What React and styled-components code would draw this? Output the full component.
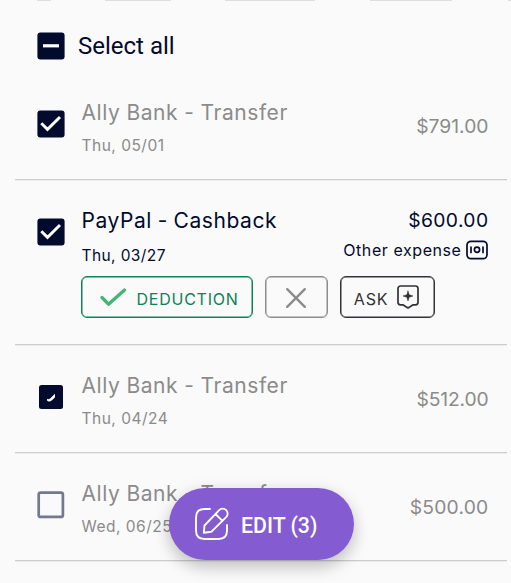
import React from "react";
import styled, { createGlobalStyle, css } from "styled-components";

const INK = "#020a2e";

const Global = createGlobalStyle`
  *, *::before, *::after { box-sizing: border-box; }
  body { margin: 0; background: #fafafa; overflow: hidden; }
`;

const Screen = styled.main`
  position: relative;
  width: 511px;
  height: 583px;
  overflow: hidden;
  background: #fafafa;
  color: ${INK};
  font-family: Inter, "Liberation Sans", sans-serif;
`;

const ChipStrip = styled.div`
  display: flex;
  height: 1px;
  padding-left: 37px;
`;

const ChipEdge = styled.span`
  flex: none;
  width: ${(p) => p.$w}px;
  margin-right: ${(p) => p.$gap}px;
  background: #dedede;
`;

const SelectAll = styled.div`
  display: flex;
  align-items: center;
  gap: 13px;
  height: 71px;
  padding: 18px 0 0 37px;
  font-family: Roboto, sans-serif;
  font-size: 24px;
`;

const SelectLabel = styled.span`
  padding-top: 1px;
`;

const Row = styled.article`
  display: grid;
  grid-template-columns: 66.5px 1fr auto;
  height: ${(p) => p.$h}px;
  margin: 0 4px 0 15px;
  border-bottom: 1px solid #cdcdcd;
  box-shadow: 0 1px 0 #ececec;
  color: ${(p) => (p.$muted ? "#8b8b8b" : INK)};
`;

const CheckCell = styled.div`
  padding: ${(p) => p.$top}px 0 0 22px;
`;

const Box = styled.svg`
  display: block;
  width: 28px;
  height: 28px;
  flex: none;
`;

const Details = styled.div`
  display: flex;
  flex-direction: column;
  min-width: 0;
`;

const Title = styled.h2`
  margin: 26px 0 0;
  height: 30px;
  line-height: 30px;
  font-size: 21px;
  font-weight: 400;
  letter-spacing: ${(p) => p.$ls}px;
  word-spacing: ${(p) => p.$ws}px;
  white-space: nowrap;
`;

const Day = styled.p`
  margin: ${(p) => (p.$roomy ? 10 : 8)}px 0 0;
  height: 20px;
  line-height: 20px;
  font-size: 15.5px;
  letter-spacing: ${(p) => p.$ls}px;
`;

const Money = styled.div`
  display: flex;
  flex-direction: column;
  align-items: flex-end;
  padding: ${(p) => p.$top}px 18.5px 0 0;
`;

const Amount = styled.div`
  height: 28px;
  line-height: 28px;
  font-size: 19.3px;
  letter-spacing: ${(p) => p.$ls}px;
`;

const Category = styled.div`
  display: flex;
  align-items: center;
  gap: 4.5px;
  height: 24px;
  margin-top: 4px;
  margin-right: 0.5px;
  font-size: 16px;
  letter-spacing: 0.57px;
  white-space: nowrap;
`;

const Actions = styled.div`
  display: flex;
  gap: 12px;
  margin-top: 10px;
  margin-left: -0.5px;
`;

const tones = {
  green: css`color: #0d8157; border-color: #0d8157;`,
  gray: css`color: #8c8c8c; border-color: #8c8c8c;`,
  dark: css`color: #323237; border-color: #323237;`,
};

const Action = styled.button`
  display: flex;
  flex: none;
  align-items: center;
  justify-content: center;
  gap: ${(p) => p.$gap || 0}px;
  width: ${(p) => p.$w}px;
  height: 42px;
  padding: 4px ${(p) => p.$right || 0}px 0 ${(p) => p.$left || 0}px;
  border: 1px solid;
  border-radius: 6px;
  background: transparent;
  font: 400 16px Inter, sans-serif;
  letter-spacing: 0.75px;
  ${(p) => tones[p.$tone]}
  box-shadow: inset 0 0 0 0.5px currentColor;
`;

const Icon = styled.svg`
  display: block;
  flex: none;
  fill: none;
  stroke: ${(p) => p.$color || "currentColor"};
  stroke-linecap: round;
  stroke-linejoin: round;
  margin-top: ${(p) => p.$shift || 0}px;
`;

const EditButton = styled.button`
  position: absolute;
  left: 169px;
  top: 488px;
  display: flex;
  align-items: center;
  gap: 11px;
  width: 185px;
  height: 72px;
  padding: 0 0 0 25px;
  border: 0;
  border-radius: 36px;
  background: #855bd1;
  color: #fff;
  box-shadow: 0 8px 16px rgba(0, 0, 0, 0.18), 0 2px 18px rgba(0, 0, 0, 0.08);
  font: 500 21.3px Roboto, sans-serif;
  white-space: nowrap;
`;

const EditLabel = styled.span`
  padding-top: 2px;
`;

function Checkbox({ state }) {
  return (
    <Box viewBox="0 0 28 28">
      {state === "empty" ? (
        <rect x="1.7" y="1.7" width="24.2" height="24.2" rx="2" fill="none" stroke="#747891" strokeWidth="2.7" />
      ) : state === "partial" ? (
        <>
          <rect x="2" y="2" width="24" height="24" rx="2.5" fill={INK} />
          <path d="M10 16l1.800.2c2.200-1.100 4-3.200 6.200-5.400v3.400c-1.800 2-3.600 3.900-5.400 4.300H11.500L10 17.600z" fill="#fff" />
        </>
      ) : (
        <rect x=".4" y=".4" width="27.2" height="27.2" rx="3" fill={INK} />
      )}
      {state === "checked" && <path d="M4.300 13.200l6.200 6.200L23 7" fill="none" stroke="#fff" strokeWidth="2.900" />}
      {state === "mixed" && <path d="M6 13.800h16" stroke="#fff" strokeWidth="3.200" />}
    </Box>
  );
}

function Transaction({ state, title, day, amount, amountSpacing }) {
  return (
    <Row $h={108} $muted>
      <CheckCell $top={38}><Checkbox state={state} /></CheckCell>
      <Details>
        <Title $ls={0.55} $ws={-0.3}>{title}</Title>
        <Day $ls={0.5}>{day}</Day>
      </Details>
      <Money $top={40}><Amount $ls={amountSpacing}>{amount}</Amount></Money>
    </Row>
  );
}

export default function App() {
  return (
    <>
      <Global />
      <Screen>
        <ChipStrip>
          <ChipEdge $w={14} $gap={54} />
          <ChipEdge $w={66} $gap={54} />
          <ChipEdge $w={90} $gap={55} />
          <ChipEdge $w={82} $gap={56} />
          <ChipEdge $w={10} $gap={0} />
        </ChipStrip>
        <SelectAll><Checkbox state="mixed" /><SelectLabel>Select all</SelectLabel></SelectAll>
        <Transaction state="checked" title="Ally Bank - Transfer" day="Thu, 05/01" amount="$791.00" amountSpacing={0} />
        <Row $h={165}>
          <CheckCell $top={38}><Checkbox state="checked" /></CheckCell>
          <Details>
            <Title $ls={0.55} $ws={-0.7}>PayPal - Cashback</Title>
            <Day $ls={0.4} $roomy>Thu, 03/27</Day>
            <Actions>
              <Action $tone="green" $w={172} $gap={10} $left={3}>
                <Icon width="28" height="22" viewBox="0 0 28 22" $color="#43b574" strokeWidth="3.300" $shift={-5}>
                  <path d="M3 11.500l6.500 6.700L25.500 4" />
                </Icon>
                DEDUCTION
              </Action>
              <Action $tone="gray" $w={63} $right={1} aria-label="Not a deduction">
                <Icon width="22" height="22" viewBox="0 0 22 22" strokeWidth="2.400" $shift={-3}>
                  <path d="M2.200 2.200l17.600 17.600M19.800 2.200l-17.600 17.600" />
                </Icon>
              </Action>
              <Action $tone="dark" $w={95} $gap={8} $right={1}>
                ASK
                <Icon width="24" height="26" viewBox="0 0 24 26" strokeWidth="1.700" $shift={-4}>
                  <path d="M4.500 2h15a2.500 2.500 0 0 1 2.500 2.500v13.800a2.500 2.500 0 0 1-2.500 2.500h-2.300L12 24l-5.200-3.200H4.500A2.500 2.500 0 0 1 2 18.300V4.500A2.500 2.500 0 0 1 4.500 2z" />
                  <path d="M12 7l1.200 3.800 3.800 1.200-3.800 1.200L12 17l-1.200-3.800L7 12l3.800-1.200z" fill="currentColor" strokeWidth=".5" />
                </Icon>
              </Action>
            </Actions>
          </Details>
          <Money $top={26}>
            <Amount $ls={0.4}>$600.00</Amount>
            <Category>
              Other expense
              <Icon width="22" height="20" viewBox="0 0 22 20" strokeWidth="1.700">
                <rect x="1" y="1.300" width="20" height="17.400" rx="4" />
                <circle cx="11" cy="9.800" r="2.600" />
                <path d="M5 7.200v5.200M17 7.200v5.200" />
              </Icon>
            </Category>
          </Money>
        </Row>
        <Transaction state="partial" title="Ally Bank - Transfer" day="Thu, 04/24" amount="$512.00" amountSpacing={-0.15} />
        <Transaction state="empty" title="Ally Bank - Transfer" day="Wed, 06/25" amount="$500.00" amountSpacing={0.2} />
        <EditButton>
          <Icon width="36" height="36" viewBox="0 0 36 36" strokeWidth="1.900">
            <path d="M16 3H10.500Q2 3 2 11.500v13Q2 33 10.500 33h14Q33 33 33 24.500V19" />
            <path d="M9.800 26.800l.7-7.300L25.200 4.100a4.900 4.900 0 0 1 7 7L17.500 25.700zM21.500 8l6.700 6.700" />
          </Icon>
          <EditLabel>EDIT (3)</EditLabel>
        </EditButton>
      </Screen>
    </>
  );
}
